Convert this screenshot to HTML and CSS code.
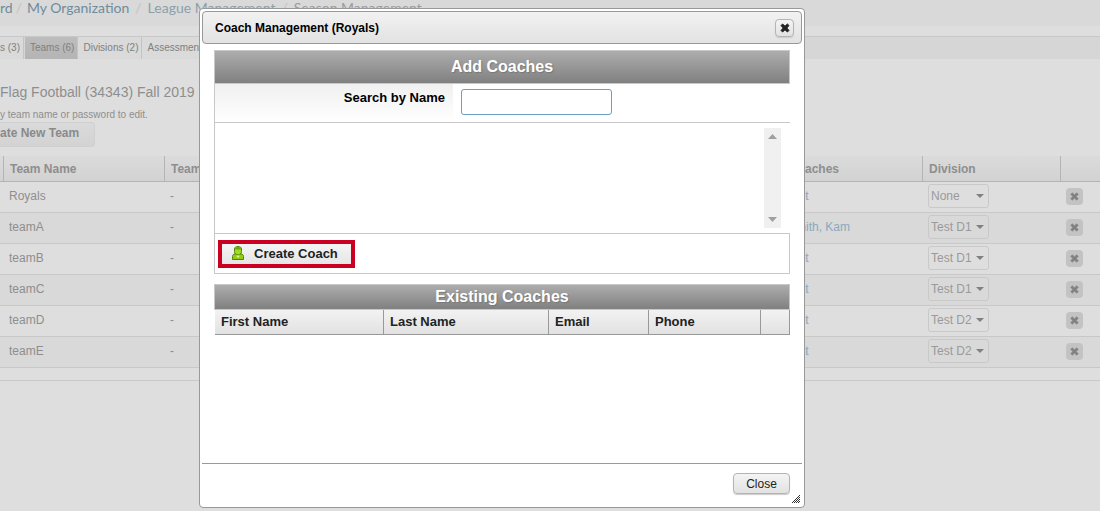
FILE: index.html
```
<!DOCTYPE html>
<html lang="en">
    <head>
        <meta charset="UTF-8">
        <meta name="viewport" content="width=device-width, initial-scale=1.0">
        <title>Season Management</title>
        <link rel="stylesheet" href="styles.css">
    </head>

    <body>
        <svg class="sprite" width="0" height="0">
            <symbol id="icon-x" viewBox="0 0 10 10">
                <path d="M1 2.6 2.6 1 5 3.2 7.4 1 9 2.6 6.8 5 9 7.4 7.4 9 5 6.8 2.6 9 1 7.4 3.2 5z" fill="currentColor" stroke="currentColor" stroke-linejoin="round"/>
            </symbol>
        </svg>

        <div class="page">
            <nav class="breadcrumb">
                <a href="#">rd</a><span class="tight">/</span><a href="#">My Organization</a><span>/</span><a href="#" class="muted">League Management</a><span>/</span><a href="#" class="current">Season Management</a>
            </nav>
            <nav class="tabs">
                <a href="#" class="first">s (3)</a>
                <a href="#" class="active">Teams (6)</a>
                <a href="#">Divisions (2)</a>
                <a href="#">Assessments</a>
            </nav>
            <h1>Flag Football (34343) Fall 2019</h1>
            <p class="hint">y team name or password to edit.</p>
            <button type="button" class="new-team">ate New Team</button>

            <table class="teams">
                <thead>
                    <tr><th class="col-edge"></th><th class="col-name">Team Name</th><th>Team Password</th><th class="col-coaches">Coaches</th><th class="col-division">Division</th><th class="col-delete"></th></tr>
                </thead>
                <tbody>
                    <tr>
                        <td></td><td>Royals</td><td>-</td><td><a href="#">Edit</a></td>
                        <td><select aria-label="Division for Royals"><option>None</option></select></td>
                        <td><button type="button" class="delete" aria-label="Delete Royals"><svg><use href="#icon-x"/></svg></button></td>
                    </tr>
                    <tr>
                        <td></td><td>teamA</td><td>-</td><td><a href="#">Smith, Kam</a></td>
                        <td><select aria-label="Division for teamA"><option>Test D1</option></select></td>
                        <td><button type="button" class="delete" aria-label="Delete teamA"><svg><use href="#icon-x"/></svg></button></td>
                    </tr>
                    <tr>
                        <td></td><td>teamB</td><td>-</td><td><a href="#">Edit</a></td>
                        <td><select aria-label="Division for teamB"><option>Test D1</option></select></td>
                        <td><button type="button" class="delete" aria-label="Delete teamB"><svg><use href="#icon-x"/></svg></button></td>
                    </tr>
                    <tr>
                        <td></td><td>teamC</td><td>-</td><td><a href="#">Edit</a></td>
                        <td><select aria-label="Division for teamC"><option>Test D1</option></select></td>
                        <td><button type="button" class="delete" aria-label="Delete teamC"><svg><use href="#icon-x"/></svg></button></td>
                    </tr>
                    <tr>
                        <td></td><td>teamD</td><td>-</td><td><a href="#">Edit</a></td>
                        <td><select aria-label="Division for teamD"><option>Test D2</option></select></td>
                        <td><button type="button" class="delete" aria-label="Delete teamD"><svg><use href="#icon-x"/></svg></button></td>
                    </tr>
                    <tr>
                        <td></td><td>teamE</td><td>-</td><td><a href="#">Edit</a></td>
                        <td><select aria-label="Division for teamE"><option>Test D2</option></select></td>
                        <td><button type="button" class="delete" aria-label="Delete teamE"><svg><use href="#icon-x"/></svg></button></td>
                    </tr>
                </tbody>
            </table>
            <div class="table-footer"></div>
        </div>

        <div class="dialog" role="dialog" aria-labelledby="dialog-title">
            <div class="titlebar">
                <h2 id="dialog-title">Coach Management (Royals)</h2>
                <button type="button" class="button dismiss" aria-label="Close dialog"><svg><use href="#icon-x"/></svg></button>
            </div>

            <div class="content">
                <h3 class="add-title">Add Coaches</h3>
                <div class="search">
                    <label for="search-name">Search by Name</label>
                    <div class="field"><input type="text" id="search-name"></div>
                </div>
                <div class="results">
                    <div class="scrollbar">
                        <svg width="9" height="5" viewBox="0 0 9 5"><path d="M0 5 4.5 0 9 5z"/></svg>
                        <svg width="9" height="5" viewBox="0 0 9 5"><path d="M0 0 4.5 5 9 0z"/></svg>
                    </div>
                </div>
                <div class="actions">
                    <button type="button" class="create">
                        <svg width="12" height="15" viewBox="0 0 12 15">
                            <path d="M.5 13.500V10.500c0-1.500 1-2.500 2.500-2.500h6c1.500 0 2.500 1 2.500 2.500v3z" fill="#93cd12" stroke="#4b8a06"/>
                            <path d="M2.500 3c0-1.600 1.300-2.500 3.500-2.500S9.500 1.400 9.500 3v2.500C9.500 7.500 8 9 6 9S2.500 7.500 2.500 5.500z" fill="#a5d926" stroke="#4b8a06"/>
                            <path d="M3 3.500c0-1.600 1-2.500 3-2.500s3 .9 3 2.500z" fill="#6ba60c"/>
                            <path d="M4 9.500h4L6 12z" fill="#dcf59b"/>
                        </svg>
                        Create Coach
                    </button>
                </div>

                <h3 class="existing-title">Existing Coaches</h3>
                <table class="coaches">
                    <thead>
                        <tr><th class="col-first">First Name</th><th class="col-last">Last Name</th><th class="col-email">Email</th><th class="col-phone">Phone</th><th></th></tr>
                    </thead>
                </table>
            </div>

            <div class="buttons">
                <button type="button" class="button close">Close</button>
            </div>
            <svg class="grip" width="8" height="8" viewBox="0 0 8 8"><path d="M0 8 8 0M2 8 8 2M4 8 8 4M6 8 8 6" stroke="#333333"/></svg>
        </div>
    </body>
</html>
```
FILE: styles.css
```
* {
    box-sizing: border-box;
}

body {
    margin: 0;
    min-height: 100vh;
    background-color: #dedede;
    color: #8e8e8e;
    font-family: "Liberation Sans", Arial, sans-serif;
    font-size: 12px;
    overflow: hidden;
}

h1, h2, h3, p {
    margin: 0;
}

a {
    text-decoration: none;
}

button, input, select {
    font-family: inherit;
}

.sprite {
    position: absolute;
}

/* page behind the dialog */
.breadcrumb {
    height: 26px;
    background-color: #d9d9d9;
    font-family: Lato, sans-serif;
    font-size: 14px;
    line-height: 16px;
    white-space: nowrap;
}

.breadcrumb a {
    color: #6f8c9b;
}

.breadcrumb .muted {
    color: #8ca0aa;
}

.breadcrumb .current {
    color: #9c9c9c;
}

.breadcrumb span {
    padding: 0 6px;
    color: #c2c2c2;
}

.breadcrumb .tight {
    padding: 0 5px 0 3px;
}

.tabs {
    display: flex;
    height: 23px;
    margin-top: 10px;
    border-top: 1px solid #c8c8c8;
    background-color: #d6d6d6;
    font-size: 10px;
    line-height: 22px;
}

.tabs a {
    padding: 0 3px 0 5px;
    border-right: 1px solid #c4c4c4;
    background-color: #dadada;
    color: #808080;
}

.tabs .first {
    padding-left: 0;
    margin-right: 1px;
}

.tabs .active {
    background: linear-gradient(#bdbdbd, #b4b4b4);
}

h1 {
    margin-top: 24px;
    font-size: 14px;
    font-weight: normal;
    line-height: 18px;
}

.hint {
    margin-top: 7px;
    font-size: 10px;
    line-height: 14px;
}

.new-team {
    display: block;
    height: 25px;
    padding: 0 15px 3px 0;
    border: 1px solid #d0d0d0;
    border-left: none;
    border-radius: 0 4px 4px 0;
    background: linear-gradient(#dadada, #d3d3d3);
    color: #8a8a8a;
    font-size: 12px;
    font-weight: bold;
}

.teams {
    width: 100%;
    margin-top: 9px;
    border-collapse: separate;
    border-spacing: 0;
    table-layout: fixed;
}

.teams th {
    height: 26px;
    padding: 0 6px;
    border-right: 1px solid #b4b4b4;
    border-bottom: 1px solid #b4b4b4;
    background: linear-gradient(#dbdbdb, #d2d2d2);
    text-align: left;
}

.teams th:last-child {
    border-right: none;
}

.teams td {
    height: 31px;
    padding: 0 5px 2px;
    border-bottom: 1px solid #c8c8c8;
}

.teams tbody tr:nth-child(even) {
    background-color: #d9d9d9;
}

.teams td a {
    color: #88a9bf;
}

.teams .col-edge {
    width: 4px;
    padding: 0;
}

.col-name {
    width: 161px;
}

.col-coaches {
    width: 140px;
}

.col-division {
    width: 138px;
}

.col-delete {
    width: 39px;
}

.teams select {
    display: block;
    width: 61px;
    height: 24px;
    padding: 0 2px;
    border: 1px solid #c9c9c9;
    border-radius: 3px;
    background: url("data:image/svg+xml,%3Csvg xmlns='http://www.w3.org/2000/svg' width='8' height='4'%3E%3Cpath d='M0 0h8L4 4z' fill='%23808080'/%3E%3C/svg%3E") no-repeat right 4px center;
    color: #9a9a9a;
    font-size: 12px;
    appearance: none;
}

.delete {
    display: grid;
    place-items: center;
    width: 17px;
    height: 17px;
    padding: 0;
    border: none;
    border-radius: 4px;
    background-color: #c3c3c3;
    color: #808080;
}

.delete svg {
    width: 9px;
    height: 9px;
}

.table-footer {
    height: 13px;
    border-bottom: 1px solid #c8c8c8;
}

/* dialog */
.dialog {
    position: absolute;
    top: 8px;
    right: 295px;
    left: 199px;
    padding: 2px;
    border: 1px solid #999999;
    border-radius: 4px;
    background-color: #ffffff;
    color: #222222;
}

.titlebar {
    display: flex;
    align-items: center;
    justify-content: space-between;
    height: 33px;
    padding: 0 7px 0 12px;
    border: 1px solid #999999;
    border-radius: 4px;
    background: linear-gradient(#f2f2f2, #e2e2e2);
}

.titlebar h2 {
    color: #000000;
    font-size: 12px;
}

.button {
    border: 1px solid #b4b4b4;
    border-radius: 4px;
    background: linear-gradient(#f4f4f4, #e2e2e2);
    box-shadow: 0 1px 1px #cccccc;
    color: #222222;
}

.dismiss {
    display: grid;
    place-items: center;
    width: 19px;
    height: 18px;
    padding: 0;
}

.dismiss svg {
    width: 10px;
    height: 10px;
}

.content {
    min-height: 419px;
    padding: 6px 12px 0;
}

h3 {
    border: 1px solid #c8c8c8;
    background: linear-gradient(#adadad, #808080);
    color: #ffffff;
    font-size: 16px;
    text-align: center;
    text-shadow: 1px 1px 1px #777777;
}

.add-title {
    line-height: 32px;
}

.search {
    display: flex;
    height: 39px;
    border-bottom: 1px solid #c8c8c8;
    border-left: 1px solid #c8c8c8;
}

.search label {
    width: 238px;
    padding: 6px 8px 0 0;
    background: linear-gradient(#f0f0f0, #ffffff);
    color: #000000;
    font-size: 13px;
    font-weight: bold;
    line-height: 16px;
    text-align: right;
}

.field {
    padding: 5px 8px;
}

.search input {
    display: block;
    width: 151px;
    height: 26px;
    border: 1px solid #6a9fc0;
    border-radius: 3px;
}

.results {
    display: flex;
    justify-content: flex-end;
    height: 110px;
    padding: 5px 9px;
    border-left: 1px solid #c8c8c8;
}

.scrollbar {
    display: flex;
    flex-direction: column;
    justify-content: space-between;
    align-items: center;
    width: 17px;
    padding: 6px 0;
    background-color: #f0f0f0;
    fill: #a0a0a0;
}

.actions {
    height: 41px;
    padding: 6px 3px;
    border: 1px solid #c8c8c8;
}

.create {
    display: flex;
    align-items: center;
    gap: 10px;
    height: 28px;
    padding: 0 13px 2px 10px;
    border: 4px solid #c90022;
    background: linear-gradient(#f4f4f4, #e6e6e6);
    color: #222222;
    font-size: 13px;
    font-weight: bold;
}

.existing-title {
    margin-top: 10px;
    line-height: 24px;
}

.coaches {
    width: 100%;
    border-left: 1px solid #ffffff;
    border-collapse: separate;
    border-spacing: 0;
    table-layout: fixed;
}

.coaches th {
    height: 25px;
    padding: 0 6px 2px;
    border-right: 1px solid #999999;
    border-bottom: 1px solid #999999;
    background: linear-gradient(#f2f2f2, #e2e2e2);
    font-size: 13px;
    text-align: left;
}

.col-first {
    width: 169px;
}

.col-last {
    width: 165px;
}

.col-email {
    width: 100px;
}

.col-phone {
    width: 112px;
}

.buttons {
    display: flex;
    justify-content: flex-end;
    height: 42px;
    padding: 9px 12px;
    border-top: 1px solid #999999;
}

.close {
    width: 57px;
    height: 21px;
    padding: 0;
    font-size: 12px;
}

.grip {
    position: absolute;
    right: 4px;
    bottom: 4px;
}
```
